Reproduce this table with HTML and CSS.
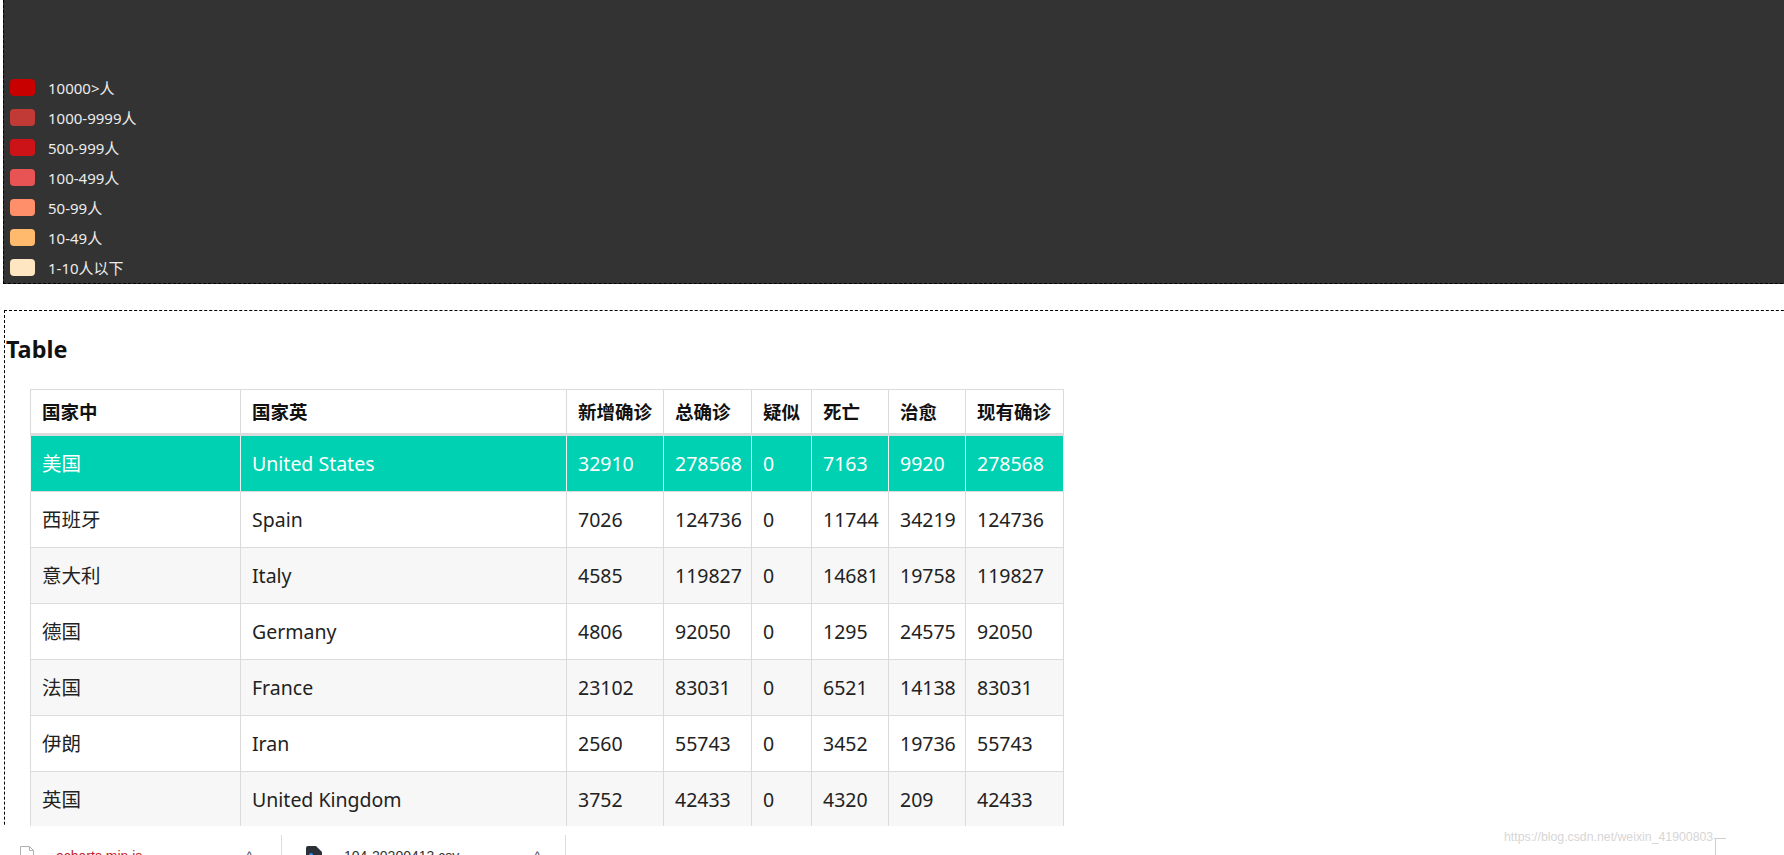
FILE: index.html
```html
<!DOCTYPE html>
<html lang="zh">
<head>
<meta charset="utf-8">
<title>Table</title>
<link rel="stylesheet" href="styles.css">
</head>
<body>
<div class="page">
  <div class="content">
    <div class="map-box">
      <ul class="legend">
        <li class="legend-item"><span class="swatch c1"></span><span>10000&gt;人</span></li>
        <li class="legend-item"><span class="swatch c2"></span><span>1000-9999人</span></li>
        <li class="legend-item"><span class="swatch c3"></span><span>500-999人</span></li>
        <li class="legend-item"><span class="swatch c4"></span><span>100-499人</span></li>
        <li class="legend-item"><span class="swatch c5"></span><span>50-99人</span></li>
        <li class="legend-item"><span class="swatch c6"></span><span>10-49人</span></li>
        <li class="legend-item"><span class="swatch c7"></span><span>1-10人以下</span></li>
      </ul>
    </div>
    <div class="table-box">
      <h3 class="title">Table</h3>
      <table class="data">
        <colgroup>
          <col class="w-cn"><col class="w-en"><col class="w-new"><col class="w-total"><col class="w-sus"><col class="w-dead"><col class="w-cure"><col class="w-now">
        </colgroup>
        <thead>
          <tr><th>国家中</th><th>国家英</th><th>新增确诊</th><th>总确诊</th><th>疑似</th><th>死亡</th><th>治愈</th><th>现有确诊</th></tr>
        </thead>
        <tbody>
          <tr class="selected"><td>美国</td><td>United States</td><td>32910</td><td>278568</td><td>0</td><td>7163</td><td>9920</td><td>278568</td></tr>
          <tr><td>西班牙</td><td>Spain</td><td>7026</td><td>124736</td><td>0</td><td>11744</td><td>34219</td><td>124736</td></tr>
          <tr class="striped"><td>意大利</td><td>Italy</td><td>4585</td><td>119827</td><td>0</td><td>14681</td><td>19758</td><td>119827</td></tr>
          <tr><td>德国</td><td>Germany</td><td>4806</td><td>92050</td><td>0</td><td>1295</td><td>24575</td><td>92050</td></tr>
          <tr class="striped"><td>法国</td><td>France</td><td>23102</td><td>83031</td><td>0</td><td>6521</td><td>14138</td><td>83031</td></tr>
          <tr><td>伊朗</td><td>Iran</td><td>2560</td><td>55743</td><td>0</td><td>3452</td><td>19736</td><td>55743</td></tr>
          <tr class="striped"><td>英国</td><td>United Kingdom</td><td>3752</td><td>42433</td><td>0</td><td>4320</td><td>209</td><td>42433</td></tr>
        </tbody>
      </table>
    </div>
  </div>
  <div class="shelf">
    <div class="dl-item">
      <svg class="dl-icon" width="14" height="18" viewBox="0 0 14 18"><path d="M0.5 0.5h9l4 4v13h-13z" fill="#fff" stroke="#b0b0b0"/><path d="M9.5 0.5v4h4" fill="none" stroke="#b0b0b0"/></svg>
      <span class="dl-name red">echarts.min.js</span>
      <span class="dl-caret">^</span>
    </div>
    <div class="dl-item">
      <svg class="dl-icon" width="16" height="20" viewBox="0 0 16 20"><path d="M0 2a2 2 0 0 1 2-2h8l6 6v14H0z" fill="#2b3039"/><circle cx="5" cy="9" r="2" fill="#2d8cf0"/></svg>
      <span class="dl-name">104-20200413.csv</span>
      <span class="dl-caret">^</span>
    </div>
    <div class="watermark">https://blog.csdn.net/weixin_41900803<span class="wm-mark"></span></div>
  </div>
</div>
</body>
</html>
```
FILE: styles.css
```css
* { box-sizing: border-box; }
html, body { margin: 0; padding: 0; background: #fff; }
body {
  font-family: "Noto Sans", "Noto Sans CJK SC", sans-serif;
  color: #222;
}
.page {
  width: 1784px;
  height: 855px;
  overflow: hidden;
  position: relative;
}
.content {
  height: 826px;
  overflow: hidden;
  padding-left: 3px;
}
.map-box {
  width: 1900px;
  height: 284px;
  background: #333;
  border-left: 1px dashed #000;
  border-bottom: 1px dashed #000;
  display: flex;
  flex-direction: column;
  justify-content: flex-end;
  padding: 0 0 7px 6px;
}
.legend {
  list-style: none;
  margin: 0;
  padding: 0;
  display: flex;
  flex-direction: column;
  gap: 13px;
}
.legend-item {
  display: flex;
  align-items: center;
  height: 17px;
  font-size: 15px;
  color: #ececec;
  font-family: "Noto Sans", "Noto Sans CJK SC", sans-serif;
}
.swatch {
  width: 25px;
  height: 17px;
  border-radius: 4px;
  margin-right: 13px;
  flex: none;
}
.c1 { background: #c80000; }
.c2 { background: #c23a36; }
.c3 { background: #cc1418; }
.c4 { background: #e85454; }
.c5 { background: #ff8e6a; }
.c6 { background: #ffba6e; }
.c7 { background: #ffe6c2; }

.table-box {
  margin-top: 26px;
  margin-left: 1px;
  width: 1900px;
  border-top: 1px dashed #000;
  border-left: 1px dashed #000;
  padding-top: 24px;
  height: 600px;
}
.title {
  margin: 0 0 0 1px;
  font-size: 23.4px;
  font-weight: 700;
  line-height: 28px;
  color: #111;
}
.data {
  margin: 26px 0 0 25px;
  border-collapse: collapse;
  table-layout: fixed;
  width: 1033px;
  font-size: 19.5px;
}
.w-cn { width: 210px; }
.w-en { width: 326px; }
.w-new { width: 97px; }
.w-total { width: 88px; }
.w-sus { width: 60px; }
.w-dead { width: 77px; }
.w-cure { width: 77px; }
.w-now { width: 98px; }
.data th, .data td {
  border: 1px solid #dbdbdb;
  text-align: left;
  white-space: nowrap;
  overflow: hidden;
  vertical-align: middle;
}
.data th {
  padding: 6px 11px;
  line-height: 31px;
  font-weight: 700;
  font-size: 18.5px;
  color: #111;
  border-bottom: 3px solid #dbdbdb;
}
.data td {
  padding: 12px 11px;
  line-height: 31px;
  color: #222;
}
.data tr.selected td {
  background: #00d1b2;
  color: #fff;
  border-left-color: #eef6f4;
  border-right-color: #eef6f4;
}
.data tr.striped td { background: #f7f7f7; }

.shelf {
  position: relative;
  height: 29px;
  display: flex;
  background: #fff;
  padding-top: 9px;
}
.dl-item {
  display: flex;
  align-items: flex-start;
  border-right: 1px solid #dcdcdc;
  height: 40px;
  padding: 11px 0 0 20px;
  font-size: 14px;
  font-family: "Liberation Sans", Arial, sans-serif;
  color: #333;
}
.dl-item:first-child { width: 282px; }
.dl-item:nth-child(2) { width: 284px; padding-left: 24px; }
.dl-icon { flex: none; }
.dl-name { margin: 2px 0 0 22px; width: 190px; }
.red { color: #c5221f; }
.dl-caret { margin-top: 3px; color: #555; }
.watermark {
  position: absolute;
  left: 1504px;
  top: 4px;
  font-family: "Liberation Sans", Arial, sans-serif;
  font-size: 12.3px;
  line-height: 15px;
  color: #d6d6d6;
  display: flex;
  align-items: flex-start;
}
.wm-mark {
  width: 12px;
  height: 20px;
  margin-left: 1px;
  margin-top: 8px;
  border-top: 1px solid #cfcfcf;
  position: relative;
}
.wm-mark::after {
  content: "";
  position: absolute;
  left: 1px;
  top: 0;
  height: 20px;
  border-left: 1px solid #cfcfcf;
}
```
